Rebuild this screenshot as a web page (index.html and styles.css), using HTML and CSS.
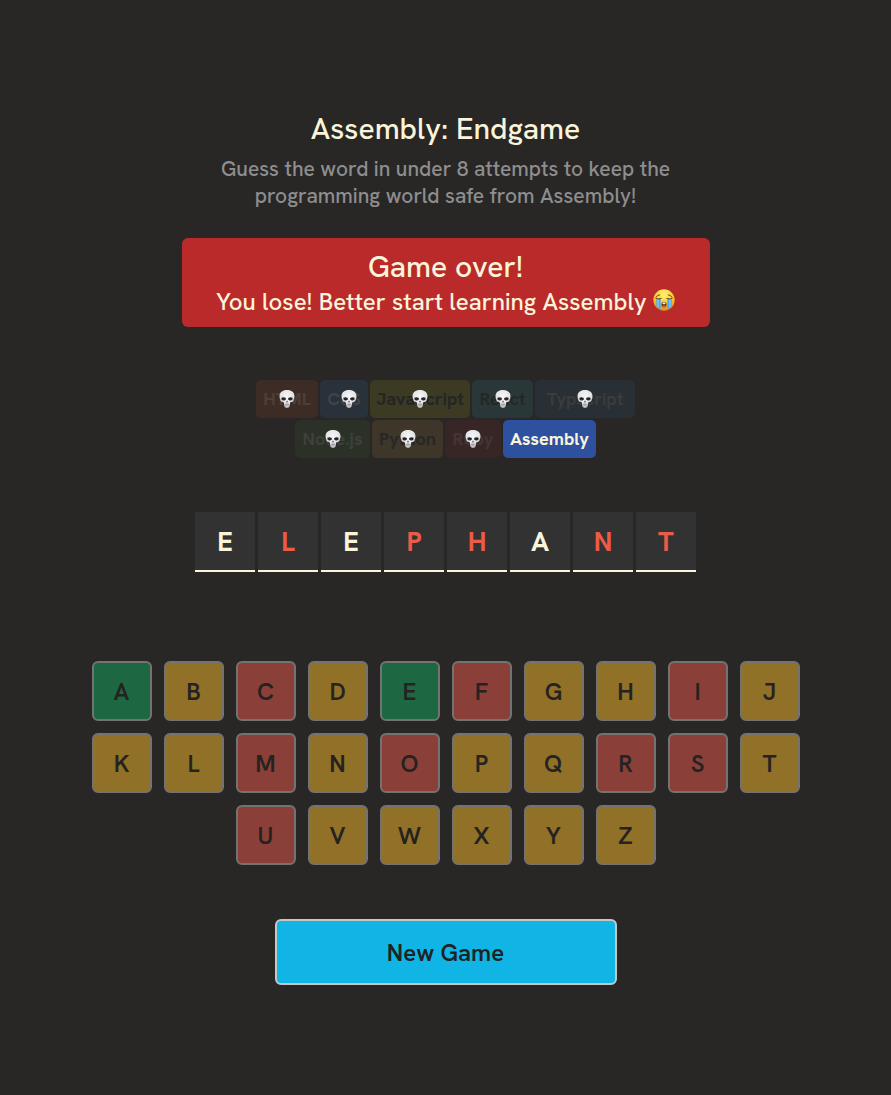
FILE: index.html
```
<!DOCTYPE html>
<html lang="en">
<head>
<meta charset="utf-8">
<meta name="viewport" content="width=device-width, initial-scale=1">
<title>Assembly: Endgame</title>
<link rel="stylesheet" href="styles.css">
</head>
<body>
<svg class="defs" aria-hidden="true">
  <defs>
    <radialGradient id="bone" cx="50%" cy="35%" r="65%">
      <stop offset="0" stop-color="#f6f6f6"/><stop offset=".65" stop-color="#e4e4e6"/><stop offset="1" stop-color="#b3b3b8"/>
    </radialGradient>
    <radialGradient id="face" cx="50%" cy="25%" r="75%">
      <stop offset="0" stop-color="#fff27a"/><stop offset=".55" stop-color="#fbcd2f"/><stop offset="1" stop-color="#e98b16"/>
    </radialGradient>
    <symbol id="skull" viewBox="0 0 16 19">
      <path fill="url(#bone)" d="M8 .5C3.400.5.500 3 .5 6.700c0 1.600.4 2.500.8 3.400.3.900.2 1.600 1 2 .7.400 2 .3 2.400.9.500.700.300 2.900.8 4.100.3.800 1.200 1.300 2.500 1.300s2.200-.5 2.500-1.300c.5-1.200.3-3.400.8-4.100.4-.6 1.700-.5 2.400-.9.800-.4.700-1.100 1-2 .4-.9.800-1.800.8-3.400C15.500 3 12.600.5 8 .5Z"/>
      <path d="M2.500 8.200Q4 7 6.800 8.400q.6 1.800-1 2.300-2.300.6-3.100-.5-.5-1-.2-2ZM13.500 8.200Q12 7 9.200 8.400q-.6 1.800 1 2.300 2.300.6 3.100-.5.500-1 .2-2Z" fill="#24242a"/>
      <path d="M8 11 7 12.700h.8l.2-.3.2.3H9Z" fill="#333338"/>
      <path d="M5.900 14.800h4.200M7 14v2.200M8 14v2.200M9 14v2.200" stroke="#85858b" stroke-width=".5" fill="none"/>
    </symbol>
  </defs>
</svg>
<main class="game">
  <header class="intro">
    <h1 class="title">Assembly: Endgame</h1>
    <p class="subtitle">Guess the word in under 8 attempts to keep the programming world safe from Assembly!</p>
  </header>

  <section class="status" role="status">
    <h2 class="status-title">Game over!</h2>
    <p class="status-text">You lose! Better start learning Assembly
      <svg class="crying" viewBox="0 0 22 22" role="img" aria-label="Loudly crying face">
        <circle cx="11" cy="11" r="10.700" fill="url(#face)"/>
        <path d="M3.300 9.500h4.400v10.700a10.700 10.700 0 0 1-4.400-3.200ZM14.300 9.500h4.400V17a10.700 10.700 0 0 1-4.400 3.200Z" fill="#4ba9ec"/>
        <path d="M5 10v8M17 10v8" stroke="#87d0fa" stroke-width="1.200"/>
        <path d="M2.800 8.200Q4 6.500 6.700 5.800M19.200 8.200Q18 6.500 15.300 5.800M3 9.400q2.500 1.400 5.200 0M19 9.400q-2.500 1.400-5.200 0" fill="none" stroke="#794410" stroke-width="1" stroke-linecap="round"/>
        <ellipse cx="11" cy="15.600" rx="2.500" ry="2.900" fill="#6b3513"/>
        <ellipse cx="11" cy="14.300" rx="1.500" ry="1" fill="#f8f3e9"/>
        <ellipse cx="11" cy="17.200" rx="1.600" ry="1" fill="#d36a46"/>
      </svg>
    </p>
  </section>

  <section class="languages" aria-label="Languages">
    <span class="chip html"><span>HTML</span><svg class="skull"><use href="#skull"/></svg></span>
    <span class="chip css"><span>CSS</span><svg class="skull"><use href="#skull"/></svg></span>
    <span class="chip javascript"><span>JavaScript</span><svg class="skull"><use href="#skull"/></svg></span>
    <span class="chip react"><span>React</span><svg class="skull"><use href="#skull"/></svg></span>
    <span class="chip typescript"><span>Typscript</span><svg class="skull"><use href="#skull"/></svg></span>
    <span class="chip node"><span>Node.js</span><svg class="skull"><use href="#skull"/></svg></span>
    <span class="chip python"><span>Python</span><svg class="skull"><use href="#skull"/></svg></span>
    <span class="chip ruby"><span>Ruby</span><svg class="skull"><use href="#skull"/></svg></span>
    <span class="chip assembly">Assembly</span>
  </section>

  <section class="word" aria-label="Word">
    <span class="letter">E</span><span class="letter missed">L</span><span class="letter">E</span><span class="letter missed">P</span><span class="letter missed">H</span><span class="letter">A</span><span class="letter missed">N</span><span class="letter missed">T</span>
  </section>

  <section class="keyboard" aria-label="Keyboard">
    <button class="key right" disabled>A</button><button class="key" disabled>B</button><button class="key wrong" disabled>C</button><button class="key" disabled>D</button><button class="key right" disabled>E</button><button class="key wrong" disabled>F</button><button class="key" disabled>G</button><button class="key" disabled>H</button><button class="key wrong" disabled>I</button><button class="key" disabled>J</button><button class="key" disabled>K</button><button class="key" disabled>L</button><button class="key wrong" disabled>M</button><button class="key" disabled>N</button><button class="key wrong" disabled>O</button><button class="key" disabled>P</button><button class="key" disabled>Q</button><button class="key wrong" disabled>R</button><button class="key wrong" disabled>S</button><button class="key" disabled>T</button><button class="key wrong" disabled>U</button><button class="key" disabled>V</button><button class="key" disabled>W</button><button class="key" disabled>X</button><button class="key" disabled>Y</button><button class="key" disabled>Z</button>
  </section>

  <button class="new-game">New Game</button>
</main>
</body>
</html>
```
FILE: styles.css
```
* {
  box-sizing: border-box;
}

body {
  margin: 0;
  min-height: 100vh;
  background: #282726;
  color: #f9f4da;
  font-family: "Hanken Grotesk", "HK Grotesk", Lato, sans-serif;
}

h1, h2, p {
  margin: 0;
  font-weight: 500;
}

.defs {
  position: absolute;
  width: 0;
  height: 0;
}

.game {
  display: flex;
  flex-direction: column;
  align-items: center;
  padding: 110px 24px 108px;
}

.intro {
  max-width: 528px;
  text-align: center;
}

.title {
  font-size: 30px;
  line-height: 38px;
}

.subtitle {
  max-width: 480px;
  margin: 7px auto 0;
  color: #8e8e8e;
  font-size: 21px;
  line-height: 27px;
}

.status {
  width: 100%;
  max-width: 528px;
  margin-top: 29px;
  padding: 10px 8px;
  border-radius: 6px;
  background: #ba2a2a;
  text-align: center;
}

.status-title {
  font-size: 30px;
  line-height: 38px;
}

.status-text {
  font-size: 24px;
  line-height: 31px;
}

.crying {
  width: 22px;
  height: 22px;
  vertical-align: -1px;
}

.languages {
  display: flex;
  flex-wrap: wrap;
  justify-content: center;
  gap: 2px;
  max-width: 390px;
  margin-top: 53px;
}

.chip {
  position: relative;
  height: 38px;
  border-radius: 5px;
  font-size: 18px;
  font-weight: 700;
  line-height: 38px;
  text-align: center;
}

.skull {
  position: absolute;
  top: 50%;
  left: 50%;
  width: 16px;
  height: 19px;
  transform: translate(-50%, -50%);
}

.html { width: 62px; background: #3d2c25; color: #4a4039; }
.css { width: 48px; background: #29313b; color: #434343; }
.css .skull { left: 61%; }
.javascript { width: 100px; background: #3c3a22; color: #252524; }
.react { width: 61px; background: #2a3739; color: #232827; }
.typescript { width: 100px; background: #283035; color: #3b3c3b; }
.node { width: 75px; background: #2b3127; color: #3d403b; }
.python { width: 71px; background: #3d3629; color: #292725; }
.ruby { width: 56px; background: #382526; color: #433533; }
.assembly { width: 93px; background: #2d519f; color: #f9f4da; }

.word {
  display: flex;
  flex-wrap: wrap;
  justify-content: center;
  gap: 3px;
  margin-top: 54px;
}

.letter {
  width: 60px;
  height: 60px;
  border-bottom: 2px solid #f9f4da;
  background: #323232;
  font-size: 27px;
  font-weight: 700;
  line-height: 60px;
  text-align: center;
}

.missed {
  color: #eb5b45;
}

.keyboard {
  display: flex;
  flex-wrap: wrap;
  justify-content: center;
  gap: 12px;
  max-width: 708px;
  margin-top: 89px;
}

.key {
  width: 60px;
  height: 60px;
  padding: 0;
  border: 2px solid #737372;
  border-radius: 6px;
  background: #917027;
  color: #242322;
  font: 600 24px "Hanken Grotesk", "HK Grotesk", Lato, sans-serif;
}

.right {
  background: #1d6842;
}

.wrong {
  background: #8a4038;
}

.new-game {
  width: 342px;
  max-width: 100%;
  height: 66px;
  margin-top: 54px;
  border: 2px solid #c3c7c8;
  border-radius: 6px;
  background: #11b5e5;
  color: #1e2326;
  font: 600 24px "Hanken Grotesk", "HK Grotesk", Lato, sans-serif;
  cursor: pointer;
}
```
